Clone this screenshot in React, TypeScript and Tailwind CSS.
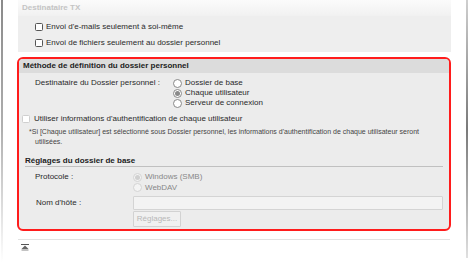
import React from "react";

const font = "font-['Liberation_Sans',Arial,sans-serif]";

function Check({ disabled = false }: { disabled?: boolean }) {
  return (
    <span
      className={`inline-block w-[8px] h-[8px] rounded-[1.5px] border bg-white shrink-0 ${
        disabled ? "border-[#cfcfcf] bg-[#f4f4f4]" : "border-[#555]"
      }`}
    />
  );
}

function Radio({ checked = false, disabled = false }: { checked?: boolean; disabled?: boolean }) {
  return (
    <span
      className={`flex items-center justify-center w-[9px] h-[9px] rounded-full border shrink-0 ${
        disabled ? "border-[#d4d4d4] bg-[#f4f4f4]" : "border-[#888] bg-white"
      }`}
    >
      {checked && (
        <span className={`w-[5px] h-[5px] rounded-full ${disabled ? "bg-[#d0d0d0]" : "bg-[#8a8a8a]"}`} />
      )}
    </span>
  );
}

export default function App() {
  return (
    <div className={`w-[470px] h-[270px] bg-white flex overflow-hidden ${font} text-[8px] text-[#2a2a2a]`}>
      <div className="ml-[1px] w-[2px] h-[262px] bg-gradient-to-b from-[#8a8a8a] via-[#b0b0b0] to-white" />
      <div className="ml-[15px] w-[433px] flex flex-col">
        {/* Top section */}
        <div className="flex flex-col">
          <div className="h-[16px] bg-gradient-to-b from-[#fbfbfb] to-[#f1f1f1] flex items-center pl-[4px] font-bold text-[#c4c4c4]">
            Destinataire TX
          </div>
          <div className="h-[36px] bg-[#eeeeee] flex flex-col pl-[17px] pt-[6px] gap-[7px]">
            <div className="flex items-center gap-[3px] h-[9px]">
              <Check />
              <span>Envoi d'e-mails seulement à soi-même</span>
            </div>
            <div className="flex items-center gap-[3px] h-[9px]">
              <Check />
              <span>Envoi de fichiers seulement au dossier personnel</span>
            </div>
          </div>
        </div>

        {/* Red box */}
        <div className="mt-[5px] -ml-[1px] w-[434px] h-[174px] border-2 border-[#ff1c1c] rounded-[6px] bg-[#ececec] flex flex-col overflow-hidden">
          <div className="h-[14px] bg-[#dcdcdc] flex items-center pl-[4px] font-bold text-[#222]">
            Méthode de définition du dossier personnel
          </div>
          <div className="flex mt-[5px] h-[30px]">
            <div className="pl-[16px] w-[154px] h-[10px] flex items-center">Destinataire du Dossier personnel :</div>
            <div className="flex flex-col">
              <div className="flex items-center gap-[3px] h-[10px]">
                <Radio />
                <span>Dossier de base</span>
              </div>
              <div className="flex items-center gap-[3px] h-[10px]">
                <Radio checked />
                <span>Chaque utilisateur</span>
              </div>
              <div className="flex items-center gap-[3px] h-[10px]">
                <Radio />
                <span>Serveur de connexion</span>
              </div>
            </div>
          </div>
          <div className="flex items-center gap-[4px] pl-[3px] mt-[6px] h-[10px]">
            <Check disabled />
            <span>Utiliser informations d'authentification de chaque utilisateur</span>
          </div>
          <div className="pl-[10px] mt-[3px] text-[7px] leading-[10px] text-[#444]">
            <div>
              *Si [Chaque utilisateur] est sélectionné sous Dossier personnel, les informations d'authentification de chaque utilisateur seront
            </div>
            <div className="pl-[6px]">utilisées.</div>
          </div>
          <div className="mx-[6px] mt-[8px] h-[12px] border-b border-[#c0c0c0] flex items-center font-bold text-[#222]">
            Réglages du dossier de base
          </div>
          <div className="flex mt-[5px] h-[21px]">
            <div className="pl-[16px] w-[114px] h-[10px] flex items-center">Protocole :</div>
            <div className="flex flex-col text-[#888]">
              <div className="flex items-center gap-[3px] h-[10px]">
                <Radio checked disabled />
                <span>Windows (SMB)</span>
              </div>
              <div className="flex items-center gap-[3px] h-[11px]">
                <Radio disabled />
                <span>WebDAV</span>
              </div>
            </div>
          </div>
          <div className="flex mt-[3px] h-[14px] items-center">
            <div className="pl-[17px] w-[114px]">Nom d'hôte :</div>
            <div className="w-[310px] h-[14px] border border-[#d4d4d4] rounded-[1px] bg-[#f3f3f3]" />
          </div>
          <div className="flex mt-[1px] pl-[114px]">
            <div className="w-[48px] h-[16px] border border-[#d2d2d2] rounded-[1px] bg-[#f0f0f0] flex items-center justify-center text-[#b8b8b8]">
              Réglages...
            </div>
          </div>
        </div>

        <div className="mt-[8px] w-[432px] h-[1px] bg-[#e2e2e2]" />
        <div className="mt-[4px] pl-[3px]">
          <svg width="8" height="7" viewBox="0 0 8 7">
            <rect x="0" y="0" width="8" height="1" fill="#555" />
            <polygon points="4,1.5 7.5,5 0.5,5" fill="#666" />
            <rect x="0.5" y="5.5" width="7" height="1" fill="#888" />
          </svg>
        </div>
      </div>
      <div className="ml-[15px] w-[2px] h-[258px] bg-gradient-to-b from-[#cfcfcf] via-[#7a7a7a] to-[#e0e0e0]" />
    </div>
  );
}
